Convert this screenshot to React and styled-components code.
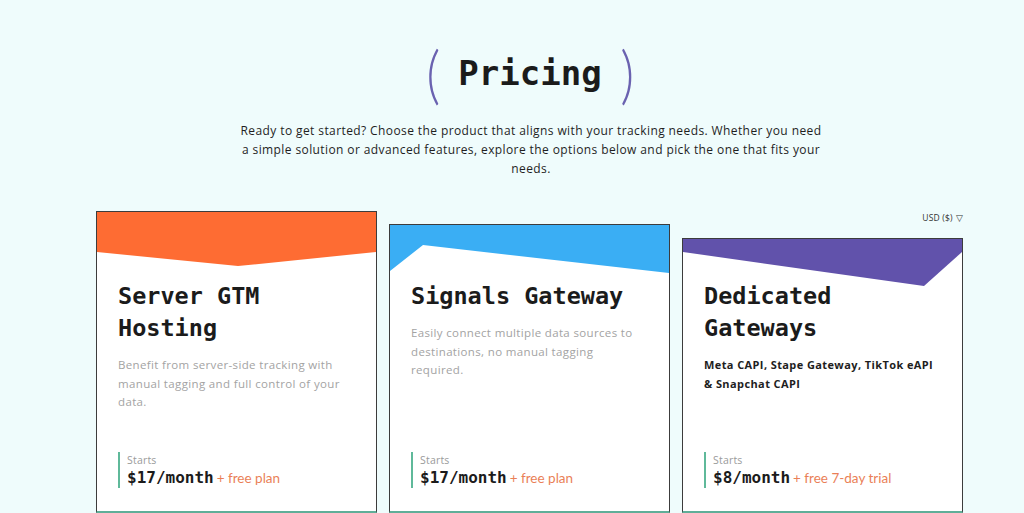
import styled, { createGlobalStyle } from "styled-components";

const Global = createGlobalStyle`
  html, body {
    margin: 0;
    padding: 0;
    background: #effcfc;
    overflow: hidden;
  }
  body {
    font-family: "Open Sans", "Noto Sans", sans-serif;
    color: #222;
  }
`;

const Page = styled.div`
  height: 513px;
  display: flex;
  flex-direction: column;
  align-items: center;
  padding-top: 41px;
  box-sizing: border-box;
`;

const TitleRow = styled.div`
  display: flex;
  align-items: center;
  justify-content: center;
  gap: 17px;
  height: 64px;
  margin-left: 36px;
`;

const Paren = styled.span`
  font-family: Lato, sans-serif;
  font-weight: 300;
  font-size: 64px;
  line-height: 64px;
  color: #6a62b0;
  transform: scaleX(0.85);
`;

const Title = styled.h1`
  margin: 0;
  font-family: "DejaVu Sans Mono", "Liberation Mono", monospace;
  font-weight: 700;
  font-size: 34px;
  line-height: 40px;
  color: #1b1b1b;
`;

const Intro = styled.p`
  margin: 16px 0 0 38px;
  font-size: 12px;
  letter-spacing: 0.4px;
  line-height: 19px;
  text-align: center;
  color: #1f1f1f;
  white-space: nowrap;
`;

const Row = styled.div`
  align-self: stretch;
  display: flex;
  gap: 12px;
  padding-left: 96px;
  margin-top: 33px;
  flex: 1;
`;

const Column = styled.div`
  width: 281px;
  display: flex;
  flex-direction: column;
  padding-top: ${(p) => p.$offset}px;
`;

const Currency = styled.div`
  align-self: flex-end;
  height: 14px;
  margin-bottom: 13px;
  font-size: 8.5px;
  letter-spacing: 0.2px;
  line-height: 14px;
  color: #333;
  span {
    margin-left: 3px;
  }
`;

const Card = styled.div`
  flex: 1;
  display: grid;
  background: #fff;
  border: 1px solid #3c3c3c;
  border-bottom: 2px solid #5fae98;
  box-sizing: border-box;
`;

const Band = styled.svg`
  grid-area: 1 / 1;
  align-self: start;
  display: block;
  width: 100%;
`;

const Content = styled.div`
  grid-area: 1 / 1;
  position: relative;
  display: flex;
  flex-direction: column;
  padding: ${(p) => p.$top}px 21px 23px 21px;
`;

const Name = styled.h2`
  margin: 0;
  font-family: "DejaVu Sans Mono", "Liberation Mono", monospace;
  font-weight: 700;
  font-size: 23.5px;
  line-height: 32px;
  color: #1b1b1b;
`;

const Desc = styled.p`
  margin: 12px 0 0;
  font-size: ${(p) => (p.$strong ? 11 : 11.5)}px;
  letter-spacing: ${(p) => (p.$strong ? 0.4 : 0.35)}px;
  line-height: 18.5px;
  color: ${(p) => (p.$strong ? "#1e1e1e" : "#a3a3a3")};
  font-weight: ${(p) => (p.$strong ? 700 : 400)};
`;

const Price = styled.div`
  margin-top: auto;
  border-left: 2px solid #5fb99a;
  padding-left: 7px;
  display: flex;
  flex-direction: column;
`;

const Starts = styled.span`
  font-size: 10.5px;
  letter-spacing: 0.2px;
  line-height: 16px;
  color: #9a9a9a;
`;

const Amount = styled.div`
  display: flex;
  align-items: baseline;
  gap: 3px;
  line-height: 20px;
  b {
    font-family: "DejaVu Sans Mono", "Liberation Mono", monospace;
    font-size: 16px;
    color: #1b1b1b;
  }
  span {
    font-family: Lato, sans-serif;
    font-size: 13.5px;
    color: #ea7f57;
  }
`;

const plans = [
  {
    name: ["Server GTM", "Hosting"],
    desc: "Benefit from server-side tracking with manual tagging and full control of your data.",
    price: "$17/month",
    extra: "+ free plan",
    color: "#fe6c33",
    offset: 0,
    band: { h: 54, points: "0,0 279,0 279,40 141,54 0,40" },
  },
  {
    name: ["Signals Gateway"],
    desc: "Easily connect multiple data sources to destinations, no manual tagging required.",
    price: "$17/month",
    extra: "+ free plan",
    color: "#3aaef4",
    offset: 13,
    band: { h: 48, points: "0,0 279,0 279,48 33,20 0,46" },
  },
  {
    name: ["Dedicated", "Gateways"],
    desc: "Meta CAPI, Stape Gateway, TikTok eAPI & Snapchat CAPI",
    strong: true,
    price: "$8/month",
    extra: "+ free 7-day trial",
    color: "#6152ab",
    offset: 0,
    currency: true,
    band: { h: 47, points: "0,0 279,0 279,13 241,47 0,13" },
  },
];

const PlanCard = ({ plan }) => {
  const cardTop = plan.offset + (plan.currency ? 27 : 0);
  return (
    <Column $offset={plan.offset}>
      {plan.currency && (
        <Currency>
          USD ($)<span>▽</span>
        </Currency>
      )}
      <Card>
        <Band viewBox={`0 0 279 ${plan.band.h}`} height={plan.band.h} preserveAspectRatio="none">
          <polygon points={plan.band.points} fill={plan.color} />
        </Band>
        <Content $top={68 - cardTop}>
          <Name>
            {plan.name.map((l) => (
              <div key={l}>{l}</div>
            ))}
          </Name>
          <Desc $strong={plan.strong}>{plan.desc}</Desc>
          <Price>
            <Starts>Starts</Starts>
            <Amount>
              <b>{plan.price}</b>
              <span>{plan.extra}</span>
            </Amount>
          </Price>
        </Content>
      </Card>
    </Column>
  );
};

export default function App() {
  return (
    <>
      <Global />
      <Page>
        <TitleRow>
          <Paren>(</Paren>
          <Title>Pricing</Title>
          <Paren>)</Paren>
        </TitleRow>
        <Intro>
          Ready to get started? Choose the product that aligns with your tracking needs. Whether you need
          <br />
          a simple solution or advanced features, explore the options below and pick the one that fits your
          <br />
          needs.
        </Intro>
        <Row>
          {plans.map((p) => (
            <PlanCard key={p.price + p.color} plan={p} />
          ))}
        </Row>
      </Page>
    </>
  );
}
